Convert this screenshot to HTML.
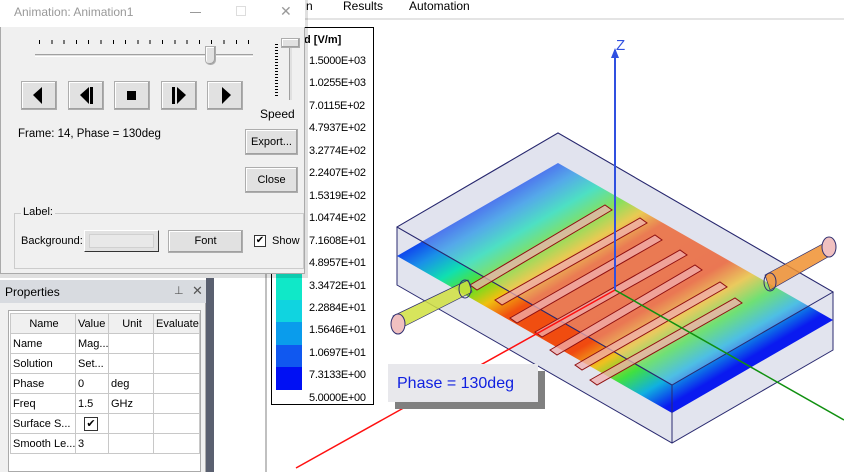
<!DOCTYPE html>
<html><head><meta charset="utf-8"><style>
*{margin:0;padding:0;box-sizing:border-box}
body{width:844px;height:472px;overflow:hidden;background:#fff;font-family:"Liberation Sans",sans-serif;font-size:11px;color:#000;position:relative}
.a{position:absolute}
.btn{position:absolute;background:#e1e1e1;border:1px solid #adadad;box-shadow:inset -1px -1px #a0a0a0,inset 1px 1px #fff;text-align:center}
.lg{position:absolute;font-size:11px}
td{border:1px solid #c8c8c8;height:20px;padding-left:2px;font-size:11px;white-space:nowrap;overflow:hidden}
</style></head><body>
<div class="a" style="left:300px;top:0;width:544px;height:20px;background:#fff;border-bottom:2px solid #e4e4e4"></div>
<div class="a" style="left:306px;top:-1px;font-size:12px">n</div>
<div class="a" style="left:343px;top:-1px;font-size:12px">Results</div>
<div class="a" style="left:409px;top:-1px;font-size:12px">Automation</div>
<div class="a" style="left:206px;top:278px;width:8px;height:194px;background:#5a6070"></div>
<div class="a" style="left:265px;top:20px;width:2px;height:452px;background:#c0c0c0"></div>
<div class="a" style="left:271px;top:27px;width:103px;height:378px;border:1.5px solid #000;background:#fff"></div>
<div class="a" style="left:276px;top:270px;width:26px;height:120px;background:linear-gradient(#10e8c8 0 30px,#10d4e0 30px 52px,#0a9cec 52px 75px,#1058f0 75px 97px,#0010f4 97px)"></div>
<div class="lg" style="top:34px;left:304px;font-weight:bold">d [V/m]</div>
<div class="lg" style="left:309px;top:50px;line-height:22.45px;letter-spacing:-0.3px">1.5000E+03<br>1.0255E+03<br>7.0115E+02<br>4.7937E+02<br>3.2774E+02<br>2.2407E+02<br>1.5319E+02<br>1.0474E+02<br>7.1608E+01<br>4.8957E+01<br>3.3472E+01<br>2.2884E+01<br>1.5646E+01<br>1.0697E+01<br>7.3133E+00<br>5.0000E+00</div>
<svg class="a" style="left:0;top:0" width="844" height="472">
<defs>
<linearGradient id="f" gradientUnits="userSpaceOnUse" x1="470" y1="200" x2="620" y2="455">
<stop offset="0" stop-color="#0a1af0"/><stop offset=".1" stop-color="#1a90e8"/><stop offset=".18" stop-color="#10e0b0"/><stop offset=".26" stop-color="#60e020"/><stop offset=".33" stop-color="#f0c010"/><stop offset=".4" stop-color="#f05010"/><stop offset=".62" stop-color="#f04a10"/><stop offset=".7" stop-color="#f0c020"/><stop offset=".78" stop-color="#40e040"/><stop offset=".86" stop-color="#10b0e0"/><stop offset=".94" stop-color="#0a1af0"/>
</linearGradient>
</defs>
<polygon points="397,227 558,133 833,292 833,350 672,443 397,285" fill="#e2e4ee" stroke="#2a2a70" stroke-width="1"/>
<polygon points="397,256 558,163 833,320 672,413" fill="url(#f)"/>
<polygon points="397,227 558,133 833,292 672,385" fill="#dfe1f0" fill-opacity=".3" stroke="#2a2a70"/>
<line x1="672" y1="385" x2="672" y2="443" stroke="#2a2a70"/>
<line x1="397" y1="227" x2="672" y2="385" stroke="#2a2a70"/>
<g stroke="#901010" stroke-width="1" fill="#f0b0b0" fill-opacity=".75">
<polygon points="470,285 605,205 612,210 477,290"/>
<polygon points="495,300 640,218 647,223 502,305"/>
<polygon points="510,318 655,235 662,240 517,323"/>
<polygon points="535,332 680,250 687,255 542,337"/>
<polygon points="550,350 695,265 702,270 557,355"/>
<polygon points="575,365 720,282 727,287 582,370"/>
<polygon points="590,380 735,298 742,303 597,385"/>
</g>
<polygon points="393,316 468,280 472,292 397,330" fill="#d0e040" fill-opacity=".85" stroke="#303070" stroke-width=".7"/>
<ellipse cx="398" cy="324" rx="7" ry="10" fill="#f0c0c0" stroke="#303070"/>
<ellipse cx="465" cy="289" rx="6" ry="9" fill="none" stroke="#303070"/>
<polygon points="765,275 830,240 835,253 770,290" fill="#f09030" fill-opacity=".85" stroke="#303070" stroke-width=".7"/>
<ellipse cx="829" cy="247" rx="7" ry="10" fill="#f0c0c0" stroke="#303070"/>
<ellipse cx="770" cy="282" rx="6" ry="9" fill="none" stroke="#303070"/>
<line x1="615" y1="50" x2="615" y2="290" stroke="#3050e0" stroke-width="2"/>
<polygon points="611,58 615,48 619,58" fill="#3050e0"/>
<line x1="615" y1="290" x2="296" y2="468" stroke="#ff1010" stroke-width="1.5"/>
<line x1="615" y1="290" x2="844" y2="420" stroke="#109010" stroke-width="1.5"/>
</svg>
<div class="a" style="left:616px;top:37px;color:#3050e0;font-size:15px">Z</div>
<div class="a" style="left:395px;top:371px;width:150px;height:38px;background:#808080"></div>
<div class="a" style="left:388px;top:364px;width:150px;height:38px;background:#e8e8ec;color:#1020e0;font-size:16px;padding:11px 0 0 9px">Phase = 130deg</div>
<div class="a" style="left:0;top:280px;width:206px;height:192px;background:#f0f0f0;border-right:1px solid #aaa"></div>
<div class="a" style="left:0;top:280px;width:206px;height:23px;background:#d8dbe0"></div>
<div class="a" style="left:5px;top:285px;font-size:12px">Properties</div>
<div class="a" style="left:174px;top:284px;font-size:11px;color:#555">⊥</div>
<div class="a" style="left:192px;top:283px;font-size:13px;color:#555">✕</div>
<div class="a" style="left:8px;top:310px;width:193px;height:162px;background:#fff;border:1px solid #aaa"></div>
<table class="a" style="left:10px;top:313px;border-collapse:collapse;width:190px;table-layout:fixed">
<tr style="background:#f0f0f0"><td style="width:65px;text-align:center">Name</td><td style="width:33px">Value</td><td style="width:45px;text-align:center">Unit</td><td>Evaluate</td></tr>
<tr><td>Name</td><td>Mag...</td><td></td><td></td></tr>
<tr><td>Solution</td><td>Set...</td><td></td><td></td></tr>
<tr><td>Phase</td><td>0</td><td>deg</td><td></td></tr>
<tr><td>Freq</td><td>1.5</td><td>GHz</td><td></td></tr>
<tr><td>Surface S...</td><td><span style="display:inline-block;width:14px;height:14px;border:1px solid #333;margin-left:6px;font-size:11px;line-height:12px;text-align:center">✔</span></td><td></td><td></td></tr>
<tr><td>Smooth Le...</td><td>3</td><td></td><td></td></tr>
</table>
<div class="a" style="left:0;top:0;width:308px;height:278px;background:rgba(0,0,0,.12)"></div>
<div class="a" style="left:0;top:0;width:305px;height:274px;background:#f0f0f0;border:1px solid #aaa"></div>
<div class="a" style="left:0;top:0;width:305px;height:27px;background:#fff"></div>
<div class="a" style="left:14px;top:5px;color:#999;font-size:12px">Animation: Animation1</div>
<div class="a" style="left:190px;top:12px;width:11px;height:1px;background:#999"></div>
<div class="a" style="left:236px;top:6px;width:10px;height:10px;border:1px solid #ddd"></div>
<div class="a" style="left:280px;top:3px;font-size:14px;color:#999">✕</div>
<div class="a" style="left:35px;top:54px;width:218px;height:3px;border-top:1px solid #a0a0a0;border-bottom:1px solid #fff;background:#e0e0e0"></div>
<div class="a" style="left:39px;top:40px;width:210px;height:4px;background:repeating-linear-gradient(90deg,#000 0 1px,transparent 1px 12.3px)"></div>
<div class="btn" style="left:205px;top:46px;width:11px;height:19px;border-radius:0 0 5px 5px"></div>
<div class="a" style="left:289px;top:42px;width:3px;height:58px;border-left:1px solid #a0a0a0;background:#e0e0e0"></div>
<div class="a" style="left:275px;top:44px;width:3px;height:53px;background:repeating-linear-gradient(#000 0 1px,transparent 1px 3px)"></div>
<div class="btn" style="left:281px;top:38px;width:19px;height:10px"></div>
<div class="a" style="left:260px;top:107px;font-size:12px">Speed</div>
<div class="btn" style="left:21px;top:81px;width:36px;height:29px"></div>
<div class="btn" style="left:68px;top:81px;width:36px;height:29px"></div>
<div class="btn" style="left:114px;top:81px;width:36px;height:29px"></div>
<div class="btn" style="left:161px;top:81px;width:36px;height:29px"></div>
<div class="btn" style="left:207px;top:81px;width:36px;height:29px"></div>
<svg class="a" style="left:0;top:0" width="260" height="120">
<g fill="#000">
<polygon points="33,95 42,87 42,104"/>
<polygon points="80,95 89,87 89,104"/><rect x="90" y="87" width="3" height="17"/>
<rect x="127" y="91" width="9" height="9"/>
<rect x="172" y="87" width="3" height="17"/><polygon points="177,87 177,104 186,95"/>
<polygon points="222,87 222,104 231,95"/>
</g></svg>
<div class="a" style="left:18px;top:128px;font-size:11.5px">Frame: 14, Phase = 130deg</div>
<div class="btn" style="left:245px;top:129px;width:53px;height:26px;line-height:24px">Export...</div>
<div class="btn" style="left:245px;top:167px;width:53px;height:26px;line-height:24px">Close</div>
<div class="a" style="left:14px;top:213px;width:290px;height:56px;border:1px solid #ccc"></div>
<div class="a" style="left:21px;top:206px;background:#f0f0f0;padding:0 2px">Label:</div>
<div class="a" style="left:21px;top:235px">Background:</div>
<div class="a" style="left:84px;top:230px;width:75px;height:22px;border:1px solid #fff;border-right-color:#333;border-bottom-color:#333;background:#e1e1e1"></div>
<div class="a" style="left:89px;top:234px;width:65px;height:14px;background:#e8e8e8;border:1px solid #d0d0d0"></div>
<div class="btn" style="left:168px;top:230px;width:75px;height:23px;line-height:21px">Font</div>
<div class="a" style="left:254px;top:235px;width:12px;height:12px;border:1px solid #333;background:#fff;font-size:10px;line-height:10px;text-align:center">✔</div>
<div class="a" style="left:272px;top:235px">Show</div>
</body></html>
